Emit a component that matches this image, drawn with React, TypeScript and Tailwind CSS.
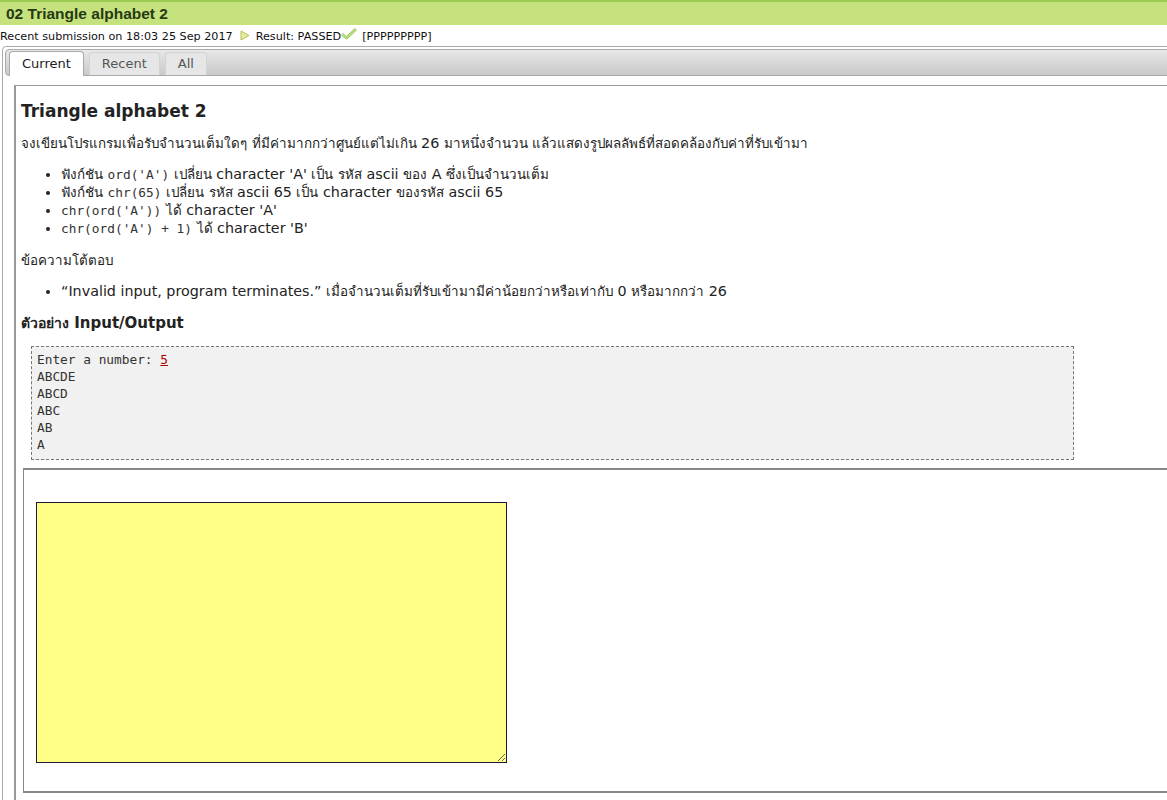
import React from "react";

const sans = { fontFamily: '"DejaVu Sans", Verdana, "Noto Sans", sans-serif' };

// Thai runs render a little smaller than the latin text around them
const Mixed: React.FC<{ text: string }> = ({ text }) => (
  <>
    {text.split(/([\u0E00-\u0E7F]+)/).map((part, i) =>
      /[\u0E00-\u0E7F]/.test(part) ? (
        <span key={i} className="text-[13.4px]">{part}</span>
      ) : (
        <span key={i} className="text-[14.3px]">{part}</span>
      )
    )}
  </>
);

const Code: React.FC<{ children: React.ReactNode }> = ({ children }) => (
  <code className="font-['DejaVu_Sans_Mono',monospace] text-[12.8px] text-[#333]">{children}</code>
);

const PlayIcon = () => (
  <svg width="11" height="11" viewBox="0 0 11 11" className="inline-block ml-[6px] mr-[6px] -mt-[3px] align-middle">
    <path d="M2 1 L10 5.5 L2 10 Z" fill="#e9eba0" stroke="#b7bb58" strokeWidth="1" />
  </svg>
);

const CheckIcon = () => (
  <svg width="16" height="12" viewBox="0 0 16 12" className="inline-block -mt-[6px] align-middle">
    <path d="M1 6 L5.5 10 L15 1" fill="none" stroke="#9ccc58" strokeWidth="3" strokeLinejoin="round" />
    <path d="M1 6 L5.5 10 L15 1" fill="none" stroke="#d8efb0" strokeWidth="1" />
  </svg>
);

const tabs = ["Current", "Recent", "All"];

export default function App() {
  return (
    <div className="w-[1167px] h-[800px] overflow-hidden bg-white text-[#222]" style={sans}>
      {/* title bar */}
      <div className="h-[25px] bg-[#c5e27f] border-t-2 border-[#9ccb4f] px-[6px] flex items-center">
        <span className="font-['Liberation_Sans',Arial,sans-serif] text-[15.5px] font-bold text-[#263a12] leading-none">
          02 Triangle alphabet 2
        </span>
      </div>

      {/* submission line */}
      <div className="h-[21px] pt-[3px] flex items-center text-[11.2px] text-[#111] whitespace-nowrap">
        <span>Recent submission on 18:03 25 Sep 2017</span>
        <PlayIcon />
        <span>Result: PASSED</span>
        <CheckIcon />
        <span className="ml-[5px]">[PPPPPPPPP]</span>
      </div>

      {/* tabs widget */}
      <div className="ml-[2px] w-[1200px] h-[760px] border border-[#aaaaaa] rounded-[4px] p-[2px]">
        <div className="h-[27px] border border-[#aaaaaa] rounded-[4px] bg-gradient-to-b from-[#e8e8e8] to-[#c9c9c9] flex items-end pl-[3px] gap-[5px]">
          {tabs.map((t, i) => (
            <div
              key={t}
              className={
                i === 0
                  ? "h-[25px] -mb-px px-[12px] flex items-center bg-white border border-[#aaaaaa] border-b-0 rounded-t-[4px] text-[13px] text-[#212121]"
                  : "h-[23px] px-[12px] flex items-center bg-[#e6e6e6] border border-[#d3d3d3] border-b-0 rounded-t-[4px] text-[13px] text-[#555]"
              }
            >
              {t}
            </div>
          ))}
        </div>

        {/* panel */}
        <div className="pl-[9px] pt-[9px]">
          <div className="border-l-2 border-t border-[#999] h-[800px] pl-[5px] pt-[14px]">
            <h2 className="h-[22px] text-[17px] font-bold text-[#222] leading-[22px]">Triangle alphabet 2</h2>
            <p className="mt-[12px] h-[18px] leading-[18px] whitespace-nowrap">
              <Mixed text="จงเขียนโปรแกรมเพื่อรับจำนวนเต็มใดๆ ที่มีค่ามากกว่าศูนย์แต่ไม่เกิน 26 มาหนึ่งจำนวน แล้วแสดงรูปผลลัพธ์ที่สอดคล้องกับค่าที่รับเข้ามา" />
            </p>
            <ul className="mt-[13px] pl-[40px] list-disc text-[14.3px] leading-[18px]">
              <li className="h-[18px]">
                <Mixed text="ฟังก์ชัน " />
                <Code>ord('A')</Code>
                <Mixed text=" เปลี่ยน character 'A' เป็น รหัส ascii ของ A ซึ่งเป็นจำนวนเต็ม" />
              </li>
              <li className="h-[18px]">
                <Mixed text="ฟังก์ชัน " />
                <Code>chr(65)</Code>
                <Mixed text=" เปลี่ยน รหัส ascii 65 เป็น character ของรหัส ascii 65" />
              </li>
              <li className="h-[18px]">
                <Code>chr(ord('A'))</Code>
                <Mixed text=" ได้ character 'A'" />
              </li>
              <li className="h-[18px]">
                <Code>chr(ord('A') + 1)</Code>
                <Mixed text=" ได้ character 'B'" />
              </li>
            </ul>
            <p className="mt-[14px] h-[18px] leading-[18px]">
              <Mixed text="ข้อความโต้ตอบ" />
            </p>
            <ul className="mt-[13px] pl-[40px] list-disc text-[14.3px] leading-[18px]">
              <li className="h-[18px]">
                <Mixed text="“Invalid input, program terminates.” เมื่อจำนวนเต็มที่รับเข้ามามีค่าน้อยกว่าหรือเท่ากับ 0 หรือมากกว่า 26" />
              </li>
            </ul>
            <h3 className="mt-[14px] h-[18px] font-bold leading-[18px] text-[15px]">
              <span className="text-[14px]">ตัวอย่าง</span>
              <span> Input/Output</span>
            </h3>
            <pre className="mt-[14px] ml-[10px] w-[1043px] h-[114px] border border-dashed border-[#777] bg-[#f1f1f1] px-[5px] pt-[4px] font-['DejaVu_Sans_Mono',monospace] text-[12.8px] leading-[17px] text-[#333]">
              Enter a number: <span className="text-[#a00] underline">5</span>
              {"\nABCDE\nABCD\nABC\nAB\nA"}
            </pre>

            {/* submission box */}
            <div className="mt-[8px] ml-[2px] border-t-2 border-l border-b-2 border-[#888] h-[325px] pl-[12px] pt-[32px]">
              <textarea
                className="block w-[471px] h-[261px] bg-[#ffff88] border border-[#1e1b3a] outline-none"
                defaultValue=""
              />
            </div>
          </div>
        </div>
      </div>
    </div>
  );
}
